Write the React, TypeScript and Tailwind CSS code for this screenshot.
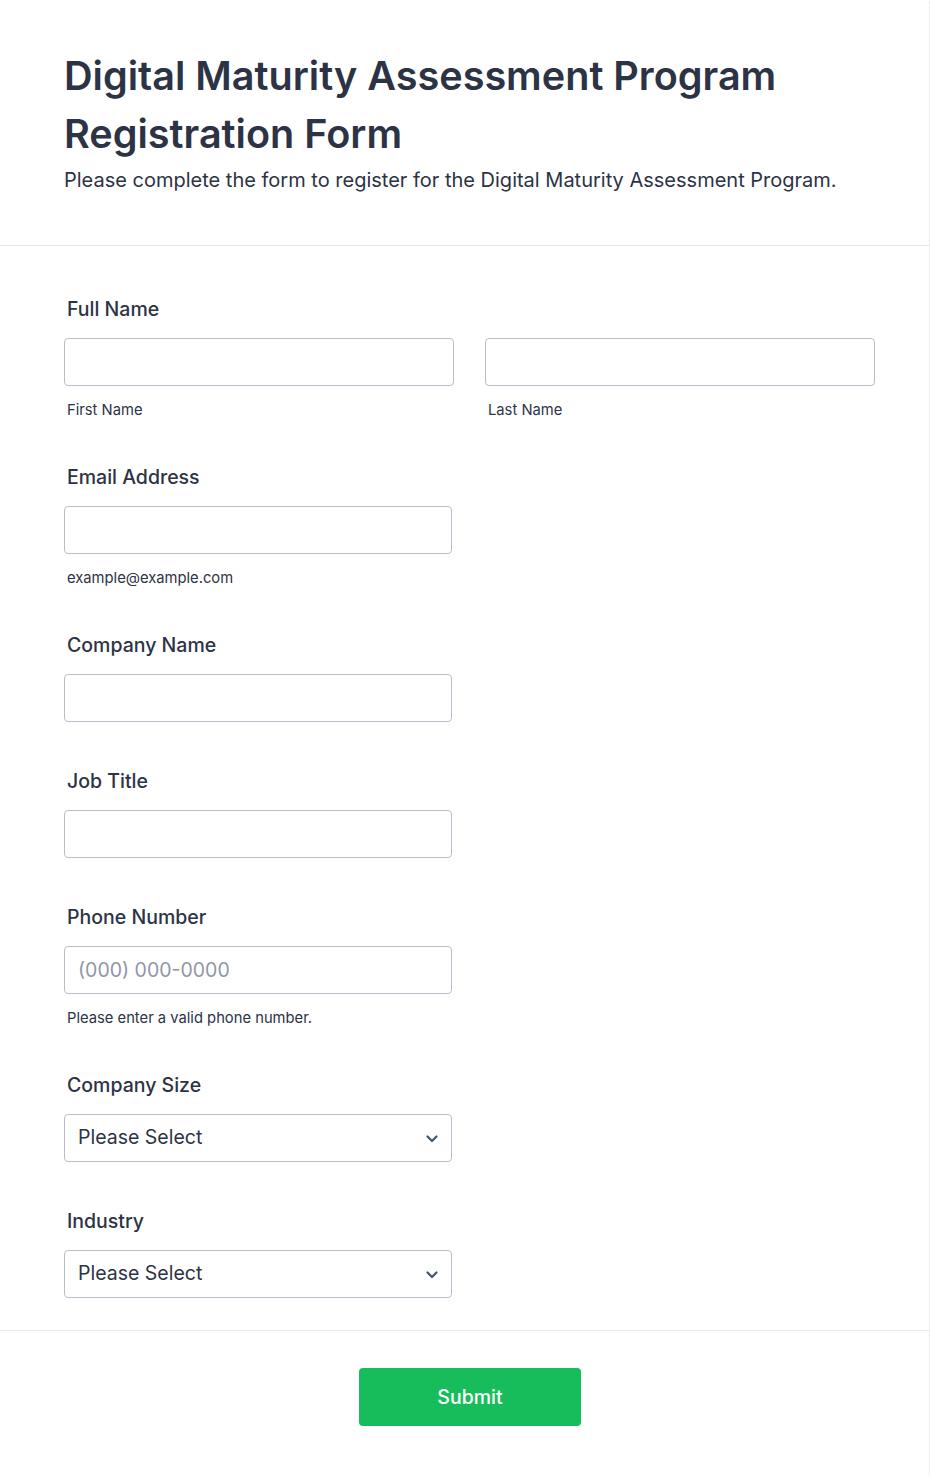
import { ReactNode } from "react";

const font = { fontFamily: "Inter, 'Noto Sans', sans-serif" };

function Label({ children }: { children: ReactNode }) {
  return (
    <label className="block pl-[3px] text-[19.5px] font-medium leading-[22px] text-[#2c3345]">
      {children}
    </label>
  );
}

function SubLabel({ children }: { children: ReactNode }) {
  return (
    <p className="mt-[15px] pl-[3px] text-[14.75px] leading-[18px] text-[#2c3345]">{children}</p>
  );
}

function TextInput({ placeholder, wide }: { placeholder?: string; wide?: boolean }) {
  return (
    <input
      type="text"
      placeholder={placeholder}
      className={`h-12 ${wide ? "w-full" : "w-[388px]"} rounded-[4px] border border-[#b8bdc9] bg-white px-[13px] text-[19.5px] text-[#2c3345] outline-none placeholder:text-[#8f96a8]`}
    />
  );
}

function Chevron() {
  return (
    <svg width="14" height="9" viewBox="0 0 14 9" fill="none" className="absolute right-[12px] top-[19px]">
      <path d="M2.5 2.5 7 7l4.5-4.5" stroke="#4c5a75" strokeWidth="2.4" strokeLinecap="round" strokeLinejoin="round" />
    </svg>
  );
}

function SelectBox() {
  return (
    <div className="relative flex h-12 w-[388px] items-center rounded-[4px] border border-[#b8bdc9] bg-white px-[13px] text-[19.5px] text-[#2c3345]">
      Please Select
      <Chevron />
    </div>
  );
}

function Field({ children, gap = "mb-[48px]" }: { children: ReactNode; gap?: string }) {
  return <div className={gap}>{children}</div>;
}

export default function App() {
  return (
    <div className="min-h-[1477px] w-[930px] rounded-r-[4px] border-r border-[#eceef3] bg-white" style={font}>
      <header className="border-b border-[#e3e5ea] px-[64px] pb-[51px] pt-[48px]">
        <h1 className="text-[39.6px] font-semibold leading-[57.5px] text-[#2c3345]">
          Digital Maturity Assessment Program Registration Form
        </h1>
        <p className="mt-[4px] text-[20px] leading-[27px] text-[#2c3345]">
          Please complete the form to register for the Digital Maturity Assessment Program.
        </p>
      </header>

      <div className="border-b border-[#e9eaef] px-[64px] pb-[32px] pt-[52px]">
        <Field gap="mb-[47px]">
          <Label>Full Name</Label>
          <div className="mt-[18px] grid w-[811px] grid-cols-2 gap-[31px]">
            <div>
              <TextInput wide />
              <SubLabel>First Name</SubLabel>
            </div>
            <div>
              <TextInput wide />
              <SubLabel>Last Name</SubLabel>
            </div>
          </div>
        </Field>

        <Field gap="mb-[47px]">
          <Label>Email Address</Label>
          <div className="mt-[18px]">
            <TextInput />
            <SubLabel>example@example.com</SubLabel>
          </div>
        </Field>

        <Field>
          <Label>Company Name</Label>
          <div className="mt-[18px]">
            <TextInput />
          </div>
        </Field>

        <Field>
          <Label>Job Title</Label>
          <div className="mt-[18px]">
            <TextInput />
          </div>
        </Field>

        <Field gap="mb-[47px]">
          <Label>Phone Number</Label>
          <div className="mt-[18px]">
            <TextInput placeholder="(000) 000-0000" />
            <SubLabel>Please enter a valid phone number.</SubLabel>
          </div>
        </Field>

        <Field>
          <Label>Company Size</Label>
          <div className="mt-[18px]">
            <SelectBox />
          </div>
        </Field>

        <Field gap="mb-0">
          <Label>Industry</Label>
          <div className="mt-[18px]">
            <SelectBox />
          </div>
        </Field>
      </div>

      <div className="flex justify-center pb-[50px] pt-[37px]">
        <button
          type="button"
          className="ml-[11px] h-[58px] w-[222px] rounded-[4px] bg-[#18bd5b] pt-[2px] text-[19.5px] font-medium text-white"
        >
          Submit
        </button>
      </div>
    </div>
  );
}
